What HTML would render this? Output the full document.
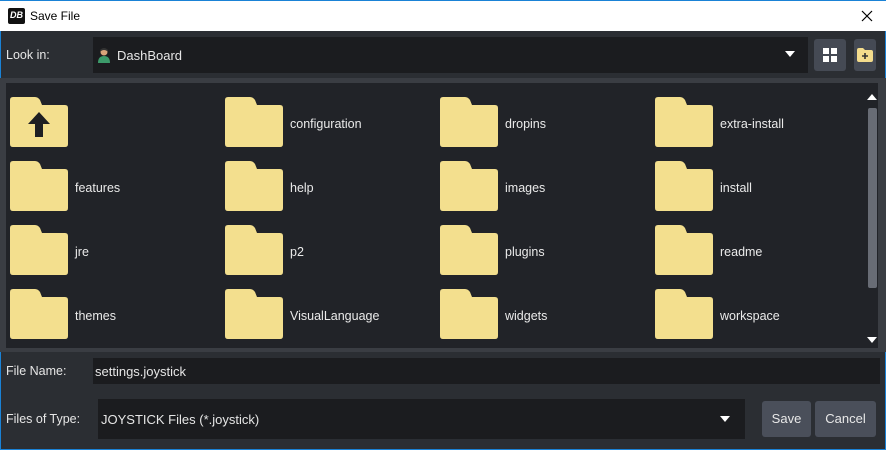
<!DOCTYPE html>
<html><head><style>
*{margin:0;padding:0;box-sizing:border-box}
body{width:886px;height:450px;overflow:hidden;font-family:"Liberation Sans",sans-serif;font-size:12px;color:#e8e8e8;background:#2b2e33;position:relative}
.abs{position:absolute}
#win{position:absolute;left:0;top:0;width:886px;height:450px;border:1px solid #1a82d6;border-top:none;background:#2b2e33}
#title{position:absolute;left:0;top:0;width:886px;height:31px;background:#fff;color:#000;border-top:1px solid #1a82d6}
.lbl{position:absolute;font-size:12.5px;color:#e6e6e6}
.fold{position:absolute;width:58px;height:50px}
.ftxt{position:absolute;font-size:12.5px;color:#eaeaea}
</style></head><body>
<div id="win"></div>
<div id="title">
 <div class="abs" style="left:8px;top:7px;width:17px;height:16px;background:#111;border-radius:2px;color:#fff;font-size:9px;font-weight:bold;font-style:italic;line-height:14px;text-align:center">DB</div>
 <div class="abs" style="left:30px;top:8px;font-size:12px">Save File</div>
 <svg class="abs" style="left:861px;top:9px" width="12" height="12"><path d="M1 1L11 11M11 1L1 11" stroke="#000" stroke-width="1.2"/></svg>
</div>
<div class="lbl" style="left:6px;top:48px">Look in:</div>
<div class="abs" style="left:93px;top:37px;width:715px;height:36px;background:#1b1c1f"></div>
<svg class="abs" style="left:98px;top:47px" width="12" height="17"><circle cx="6" cy="5" r="3.5" fill="#d9a47a"/><path d="M2 3Q6 -1 10 3L9 4Q6 2 3 4Z" fill="#333"/><path d="M0 16Q0 9 6 9Q12 9 12 16Z" fill="#3c9a6a"/></svg>
<div class="lbl" style="left:117px;top:48px;font-size:13px">DashBoard</div>
<svg class="abs" style="left:785px;top:51px" width="10" height="6"><path d="M0 0H10L5 6Z" fill="#fff"/></svg>
<div class="abs" style="left:814px;top:39px;width:32px;height:32px;background:#454a54;border-radius:3px"></div>
<svg class="abs" style="left:823px;top:48px" width="14" height="14"><rect x="0" y="0" width="6" height="6" fill="#fff"/><rect x="8" y="0" width="6" height="6" fill="#fff"/><rect x="0" y="8" width="6" height="6" fill="#fff"/><rect x="8" y="8" width="6" height="6" fill="#fff"/></svg>
<div class="abs" style="left:854px;top:39px;width:22px;height:32px;background:#454a54;border-radius:3px"></div>
<svg class="abs" style="left:857px;top:48px" width="16" height="14"><path d="M0 2Q0 0 2 0H6L8 2H14Q16 2 16 4V12Q16 14 14 14H2Q0 14 0 12Z" fill="#f3dc8c"/><path d="M8 5V11M5 8H11" stroke="#333" stroke-width="1.6"/></svg>
<div class="abs" style="left:0;top:78px;width:886px;height:274px;background:#3a3d43"></div>
<div class="abs" style="left:6px;top:83px;width:860px;height:265px;background:#212328"></div>
<div class="abs" style="left:866px;top:83px;width:12px;height:265px;background:#212328"></div>
<svg class="abs" style="left:867px;top:94px" width="10" height="6"><path d="M0 6H10L5 0Z" fill="#fff"/></svg>
<div class="abs" style="left:868px;top:108px;width:9px;height:180px;background:#686c75;border-radius:2px"></div>
<svg class="abs" style="left:867px;top:337px" width="10" height="6"><path d="M0 0H10L5 6Z" fill="#fff"/></svg>
<div id="grid"></div>
<div class="lbl" style="left:6px;top:364px">File Name:</div>
<div class="abs" style="left:93px;top:358px;width:787px;height:26px;background:#1b1c1f"></div>
<div class="lbl" style="left:95px;top:364px;font-size:13px">settings.joystick</div>
<div class="lbl" style="left:6px;top:412px">Files of Type:</div>
<div class="abs" style="left:98px;top:399px;width:647px;height:40px;background:#1b1c1f"></div>
<div class="lbl" style="left:101px;top:412px;font-size:13px">JOYSTICK Files (*.joystick)</div>
<svg class="abs" style="left:720px;top:416px" width="10" height="6"><path d="M0 0H10L5 6Z" fill="#fff"/></svg>
<div class="abs" style="left:762px;top:401px;width:49px;height:36px;background:#4a4f5a;border-radius:3px;text-align:center;line-height:36px;font-size:13px">Save</div>
<div class="abs" style="left:815px;top:401px;width:61px;height:36px;background:#4a4f5a;border-radius:3px;text-align:center;line-height:36px;font-size:13px">Cancel</div>
<script>
var names=[["",'configuration','dropins','extra-install'],['features','help','images','install'],['jre','p2','plugins','readme'],['themes','VisualLanguage','widgets','workspace']];
var cx=[10,225,440,655],h='';
for(var r=0;r<4;r++)for(var c=0;c<4;c++){var x=cx[c],y=97+r*64;
h+='<svg class="fold" style="left:'+x+'px;top:'+y+'px" viewBox="0 0 58 50"><path d="M0 3Q0 0 3 0H25Q28 0 30 3L32 8H55Q58 8 58 11V47Q58 50 55 50H3Q0 50 0 47Z" fill="#f3df8e"/>'+(r==0&&c==0?'<path d="M29 15L40 27H33V40H25V27H18Z" fill="#1e1f22"/>':'')+'</svg>';
if(names[r][c])h+='<div class="ftxt" style="left:'+(x+65)+'px;top:'+(y+20)+'px">'+names[r][c]+'</div>';}
document.getElementById('grid').innerHTML=h;
</script>
</body></html>
